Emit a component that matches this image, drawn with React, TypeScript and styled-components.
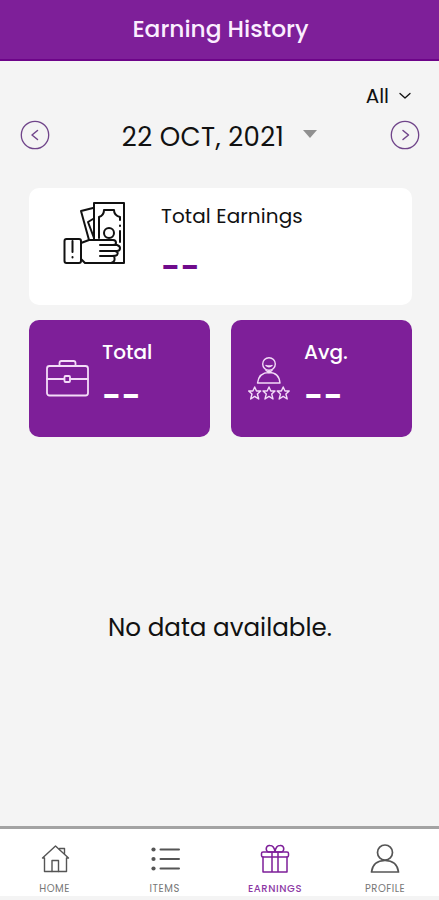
import React from "react";
import styled, { createGlobalStyle } from "styled-components";

const Global = createGlobalStyle`
  * { box-sizing: border-box; }
  body { margin: 0; background: #f4f4f4; }
`;

const purple = "#7e1f99";

const Screen = styled.div`
  height: 900px;
  display: flex;
  flex-direction: column;
  overflow: hidden;
  background: #f4f4f4;
  color: #111;
  font-family: Poppins, Inter, sans-serif;
`;

const Text = styled.span<{ $size: number; $spacing?: number; $weight?: number }>`
  display: block;
  margin: 0;
  white-space: nowrap;
  font-size: ${(p) => p.$size}px;
  line-height: 30px;
  font-weight: ${(p) => p.$weight ?? 400};
  letter-spacing: ${(p) => p.$spacing ?? 0}px;
`;

const Header = styled.header`
  height: 61px;
  flex: none;
  display: flex;
  justify-content: center;
  padding: 14px 0 0 2px;
  color: #fbeeff;
  background: ${purple};
  border-bottom: 2px solid #6d0489;
`;

const Filter = styled.div`
  height: 30px;
  margin-top: 20px;
  padding-right: 28px;
  display: flex;
  justify-content: flex-end;
  align-items: center;
  gap: 10px;
`;

const DateBar = styled.div`
  height: 30px;
  margin-top: 9px;
  padding: 0 19px 0 20px;
  display: flex;
  justify-content: space-between;
  align-items: center;
`;

const DatePick = styled.div`
  display: flex;
  align-items: center;
  gap: 19px;
  padding: 4px 1px 0 0;
`;

const Cards = styled.main`
  display: grid;
  grid-template-columns: 181px 181px;
  grid-template-rows: 117px 117px;
  gap: 15px 21px;
  margin: 38px 27px 0 29px;
`;

const TotalCard = styled.section`
  grid-column: 1 / 3;
  display: flex;
  gap: 34px;
  padding: 13px 0 0 34px;
  background: #fff;
  border-radius: 10px;
`;

const StatCard = styled.section`
  display: flex;
  gap: 13px;
  padding: 17px 0 0 17px;
  color: #fff;
  background: ${purple};
  border-radius: 10px;
`;

const StatIcon = styled.div`
  padding-top: 19px;
  color: #f3dcf8;
`;

const Dashes = styled.span<{ $color: string; $gap: number }>`
  display: block;
  margin-top: ${(p) => p.$gap}px;
  color: ${(p) => p.$color};
  font-size: 33px;
  font-weight: 600;
  line-height: 36px;
  letter-spacing: 0.3px;
`;

const Empty = styled.div`
  flex: 1;
  display: flex;
  justify-content: center;
  padding: 176px 0 0 1px;
`;

const Nav = styled.nav`
  height: 74px;
  flex: none;
  display: grid;
  grid-template-columns: repeat(4, 110.2px);
  border-top: 3px solid #a3a3a3;
  border-bottom: 4px solid #f4f4f4;
  background: #fff;
`;

const NavItem = styled.a<{ $active?: boolean }>`
  display: flex;
  flex-direction: column;
  align-items: center;
  padding: 15px 1px 0 0;
  color: ${(p) => (p.$active ? purple : "#555")};
`;

const NavLabel = styled.span<{ $active?: boolean; $spacing: number }>`
  margin-top: 8px;
  color: ${(p) => (p.$active ? "#8c38a4" : "#777")};
  font-size: 10px;
  line-height: 14px;
  letter-spacing: ${(p) => p.$spacing}px;
  font-weight: ${(p) => (p.$active ? 500 : 400)};
`;

const Line = styled.svg`
  display: block;
  flex: none;
  fill: none;
  stroke: currentColor;
  stroke-linecap: round;
  stroke-linejoin: round;
`;

const CircleArrow = ({ d }: { d: string }) => (
  <Line width="30" height="30" viewBox="0 0 30 30" color="#70458a">
    <circle cx="15" cy="15" r="13.7" strokeWidth="1.3" />
    <path d={d} strokeWidth="1.5" />
  </Line>
);

const CashHand = () => (
  <Line width="64" height="66" viewBox="0 0 64 66" color="#111" strokeWidth="2">
    <path d="M31 39V2H61V62H45" />
    <path d="M30 7L18 10L26 39M30 18L25 21L31 37" />
    <path d="M36 37V16C39 15 41 13 41 9H51C51 13 53 15 57 16V19M57 30V41" />
    <path d="M57 24.5V25" />
    <path d="M18 42L26 39H50Q53 39 53 42Q53 44 50 44H37M49 44H54Q57 45 57 47Q57 50 54 50H37M52 50Q56 51 54 54Q53 55 49 55H37M51 55Q53 61 48 62H22L18 58" fill="#fff" />
    <circle cx="46" cy="32" r="5" />
    <rect x="1.5" y="38" width="16.5" height="24" rx="2" fill="#fff" />
    <path d="M9.5 40V51M9.5 56V56.5" />
  </Line>
);

const Briefcase = () => (
  <Line width="43" height="43" viewBox="0 0 43 43" strokeWidth="1.8">
    <rect x="1" y="10" width="41" height="29.5" rx="2.5" />
    <path d="M13.5 10V7Q13.5 5 15.5 5H27.5Q29.5 5 29.5 7V10M1 23H18M24 23H42" />
    <rect x="18.5" y="20" width="5.5" height="6" rx="1" />
  </Line>
);

const starPath = "M0 -6L1.8 -2H6L2.7 1L4 6L0 3.4L-4 6L-2.7 1L-6 -2H-1.8Z";

const Rating = () => (
  <Line width="43" height="46" viewBox="0 0 43 46" strokeWidth="1.4">
    <circle cx="21" cy="8" r="6.3" />
    <path d="M18 9.5Q21 12 24 9.5M19 10H23M21 15V17M18 14.5L21 16.5L24 14.5M9.5 27Q11 16.5 21 16.5Q31 16.5 32 27Z" />
    {[6.7, 21, 35.2].map((x) => (
      <path key={x} d={starPath} transform={`translate(${x} 37)`} />
    ))}
  </Line>
);

const Home = () => (
  <Line width="30" height="30" viewBox="0 0 30 30" strokeWidth="1.4">
    <path d="M2.5 14L15.5 2L28.5 14H26.5V27.5H4.5V14Z" />
    <path d="M12 27.5V16.5H18.5V27.5M19.5 5.5V4.5H24.5V9.5" />
  </Line>
);

const Items = () => (
  <Line width="30" height="30" viewBox="0 0 30 30" strokeWidth="2">
    <path d="M10.5 5.5H29M10.5 15H29M10.5 24.5H29" />
    <g fill="currentColor" stroke="none">
      <circle cx="3.5" cy="5.5" r="2.1" />
      <circle cx="3.5" cy="15" r="2.1" />
      <circle cx="3.5" cy="24.5" r="2.1" />
    </g>
  </Line>
);

const Gift = () => (
  <Line width="30" height="30" viewBox="0 0 30 30" strokeWidth="1.5">
    <rect x="1.5" y="8" width="27" height="5" rx="1.5" />
    <path d="M3 13V28H27V13M12 8V28M18 8V28M15 8H8C5 6 6 1 10 1.5C13 1.5 14.5 4 15 8ZM15 8H22C25 6 24 1 20 1.5C17 1.5 15.5 4 15 8Z" />
  </Line>
);

const Profile = () => (
  <Line width="30" height="30" viewBox="0 0 30 30" strokeWidth="1.7">
    <circle cx="15" cy="8.5" r="7.5" />
    <path d="M1.5 28Q3 16.5 15 16.5Q27 16.5 28.5 28Z" />
  </Line>
);

const tabs = [
  { label: "HOME", icon: <Home />, spacing: 0.6 },
  { label: "ITEMS", icon: <Items />, spacing: 0.6 },
  { label: "EARNINGS", icon: <Gift />, spacing: 0.6, active: true },
  { label: "PROFILE", icon: <Profile />, spacing: 0.5 },
];

export default function App() {
  return (
    <>
      <Global />
      <Screen>
        <Header>
          <Text as="h1" $size={23.3} $weight={500}>Earning History</Text>
        </Header>
        <Filter>
          <Text $size={20}>All</Text>
          <Line width="12" height="8" viewBox="0 0 12 8" strokeWidth="1.3">
            <path d="M1 1.5L6 6L11 1.5" />
          </Line>
        </Filter>
        <DateBar>
          <CircleArrow d="M17.5 10.5L12 15L17.5 19.5" />
          <DatePick>
            <Text $size={26} $spacing={0.35}>22 OCT, 2021</Text>
            <svg width="14" height="14" viewBox="0 0 14 14">
              <path d="M0 0H14L7 8Z" fill="#909090" />
            </svg>
          </DatePick>
          <CircleArrow d="M13 10.5L18.5 15L13 19.5" />
        </DateBar>
        <Cards>
          <TotalCard>
            <CashHand />
            <div>
              <Text $size={20} $spacing={0.1}>Total Earnings</Text>
              <Dashes $color="#6f0b8b" $gap={19}>--</Dashes>
            </div>
          </TotalCard>
          <StatCard>
            <StatIcon><Briefcase /></StatIcon>
            <div>
              <Text $size={20} $weight={500}>Total</Text>
              <Dashes $color="#fff" $gap={12}>--</Dashes>
            </div>
          </StatCard>
          <StatCard>
            <StatIcon><Rating /></StatIcon>
            <div>
              <Text $size={20} $weight={500}>Avg.</Text>
              <Dashes $color="#fff" $gap={12}>--</Dashes>
            </div>
          </StatCard>
        </Cards>
        <Empty>
          <Text $size={24.6}>No data available.</Text>
        </Empty>
        <Nav>
          {tabs.map((t) => (
            <NavItem key={t.label} $active={t.active}>
              {t.icon}
              <NavLabel $active={t.active} $spacing={t.spacing}>{t.label}</NavLabel>
            </NavItem>
          ))}
        </Nav>
      </Screen>
    </>
  );
}
